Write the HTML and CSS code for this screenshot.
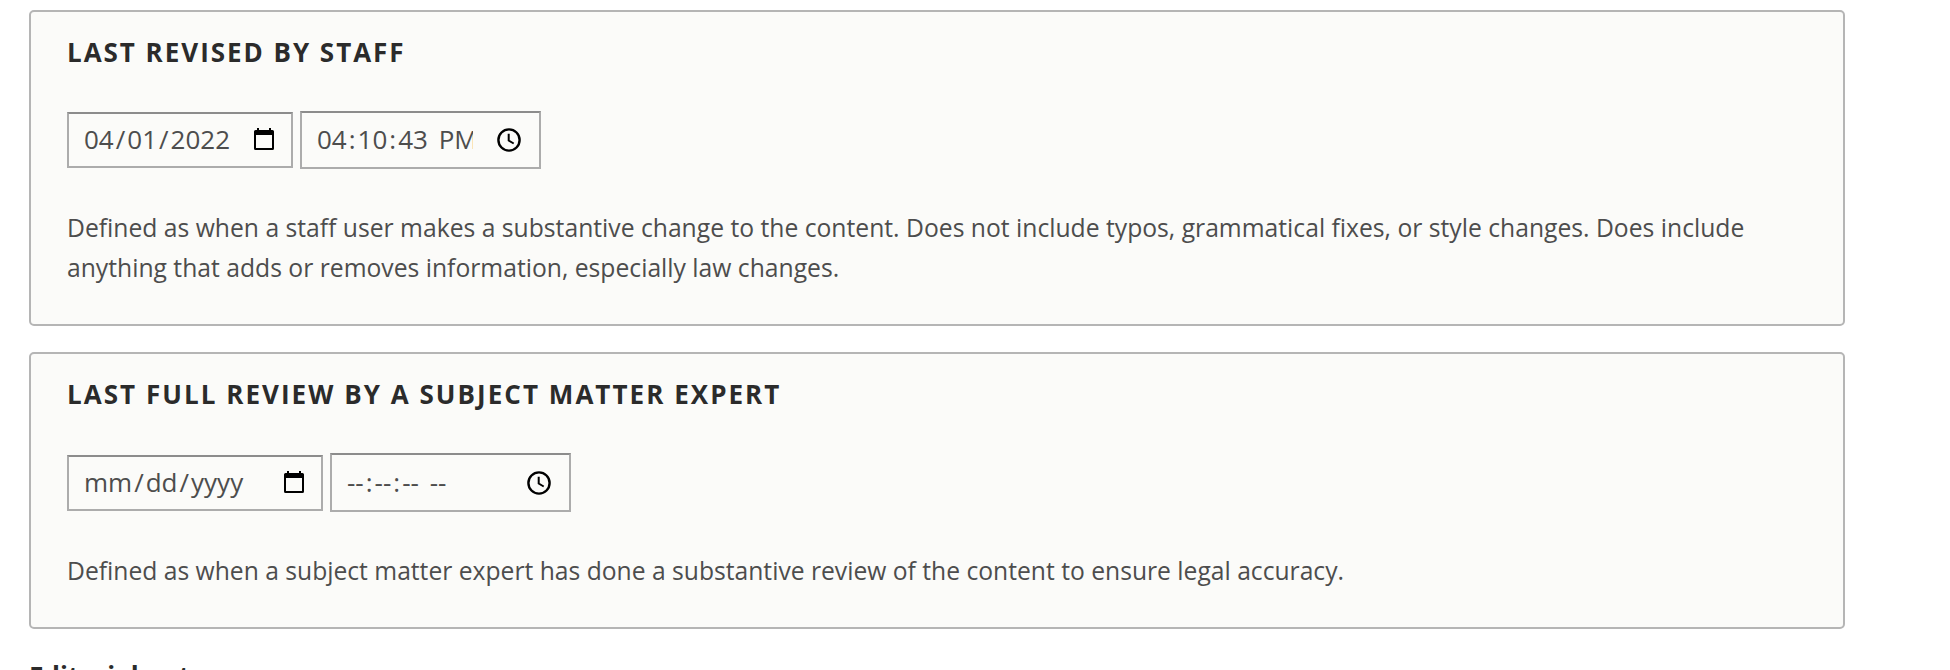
FILE: index.html
```html
<!DOCTYPE html>
<html lang="en">
<head>
<meta charset="utf-8">
<title>Review dates</title>
<link rel="stylesheet" href="styles.css">
</head>
<body>
<main class="form">
  <section class="panel">
    <h2 class="panel-title">LAST REVISED BY STAFF</h2>
    <div class="fields">
      <div class="field field-date">
        <span class="value"><span class="seg">04</span>/<span class="seg">01</span>/<span class="seg">2022</span></span>
        <svg class="icon-date" viewBox="0 0 20 22"><path fill-rule="evenodd" d="M3 0h2v2h10V0h2v2h1.500a1.500 1.500 0 0 1 1.500 1.500v17a1.500 1.500 0 0 1-1.500 1.500h-17A1.500 1.500 0 0 1 0 20.500v-17A1.500 1.500 0 0 1 1.500 2H3zM2 7v13h16V7z"/></svg>
      </div>
      <div class="field field-time">
        <span class="value value-time"><span class="seg">04</span>:<span class="seg">10</span>:<span class="seg">43</span> <span class="seg">PM</span></span>
        <svg class="icon-time" viewBox="0 0 24 24"><circle cx="12" cy="12" r="10.600"/><path d="M11.700 5.800v6.700l5 3"/></svg>
      </div>
    </div>
    <p class="help">Defined as when a staff user makes a substantive change to the content. Does not include typos, grammatical fixes, or style changes. Does include<br>anything that adds or removes information, especially law changes.</p>
  </section>
  <section class="panel panel-review">
    <h2 class="panel-title">LAST FULL REVIEW BY A SUBJECT MATTER EXPERT</h2>
    <div class="fields">
      <div class="field field-date field-date-empty">
        <span class="value"><span class="seg">mm</span>/<span class="seg">dd</span>/<span class="seg">yyyy</span></span>
        <svg class="icon-date" viewBox="0 0 20 22"><path fill-rule="evenodd" d="M3 0h2v2h10V0h2v2h1.500a1.500 1.500 0 0 1 1.500 1.500v17a1.500 1.500 0 0 1-1.500 1.500h-17A1.500 1.500 0 0 1 0 20.500v-17A1.500 1.500 0 0 1 1.500 2H3zM2 7v13h16V7z"/></svg>
      </div>
      <div class="field field-time">
        <span class="value"><span class="seg">--</span>:<span class="seg">--</span>:<span class="seg">--</span> <span class="seg">--</span></span>
        <svg class="icon-time" viewBox="0 0 24 24"><circle cx="12" cy="12" r="10.600"/><path d="M11.700 5.800v6.700l5 3"/></svg>
      </div>
    </div>
    <p class="help">Defined as when a subject matter expert has done a substantive review of the content to ensure legal accuracy.</p>
  </section>
  <h3 class="next-title">Editorial notes</h3>
</main>
</body>
</html>
```
FILE: styles.css
```css
* { box-sizing: border-box; }
html { overflow: hidden; }
body {
  margin: 0;
  height: 670px;
  overflow: hidden;
  background: #fff;
  color: #4d4d4d;
  font-family: "Open Sans", sans-serif;
  font-size: 26px;
}
.form { padding: 10px 105px 0 29px; }
.panel {
  height: 316px;
  padding: 20px 36px 0;
  border: 2px solid #b5b5b5;
  border-radius: 5px;
  background: #fbfbf9;
}
.panel-review { height: 277px; margin-top: 26px; }
.panel-title {
  margin: 0;
  height: 40px;
  line-height: 40px;
  font-size: 26px;
  font-weight: 700;
  letter-spacing: 1.97px;
  color: #2b2b2b;
  white-space: nowrap;
}
.panel-review .panel-title { letter-spacing: 2.04px; }
.fields { display: flex; align-items: center; gap: 7px; height: 58px; margin-top: 39px; }
.field {
  display: flex;
  align-items: center;
  justify-content: space-between;
  border: 2px solid #acacac;
  border-top-color: #8c8c8c;
  padding: 0 13px;
}
.field-date { width: 226px; height: 56px; padding-right: 17px; }
.field-date-empty { width: 256px; }
.field-time { width: 241px; height: 58px; padding-right: 18px; }
.panel-review .fields { height: 59px; }
.panel-review .field-date { margin-top: 1px; }
.panel-review .field-time { height: 59px; }
.value { overflow: hidden; white-space: nowrap; font-size: 26px; line-height: 40px; margin-bottom: 2px; }
.seg { padding: 0 2px; }
.value-time { width: 158px; }
.icon-date { width: 20px; height: 22px; flex: none; margin-bottom: 2px; }
.icon-time { width: 24px; height: 24px; flex: none; fill: none; stroke: #000; stroke-width: 2.400; }
.icon-time path { stroke-width: 2; }
.help { margin: 39px 0 0; font-size: 24.7px; line-height: 40px; white-space: nowrap; }
.panel-review .help { font-size: 24.66px; }
.next-title { margin: 27px 0 0; font-size: 26px; line-height: 40px; color: #2b2b2b; }
```
